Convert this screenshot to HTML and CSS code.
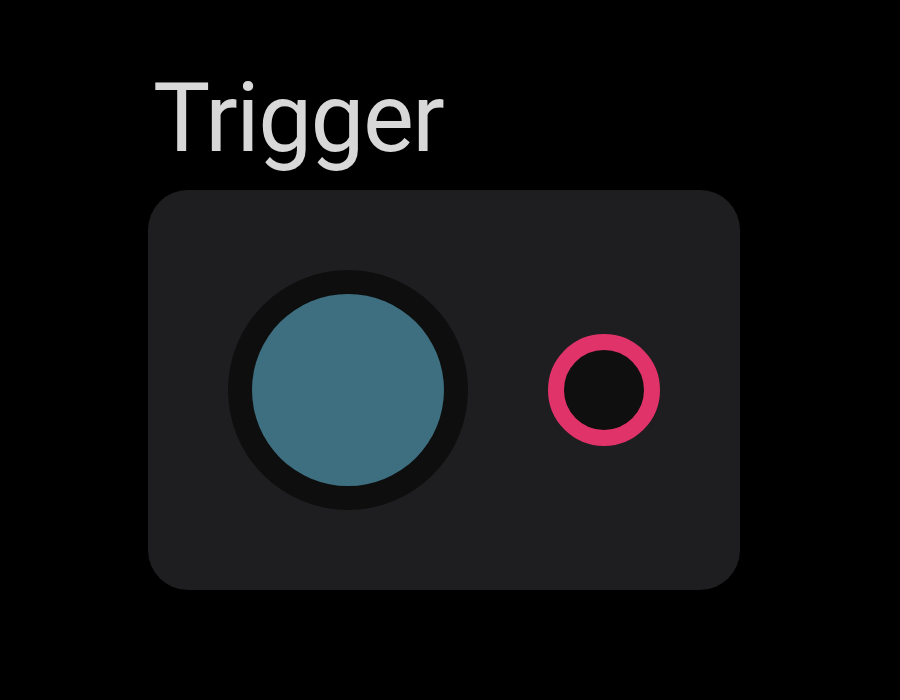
FILE: index.html
```html
<!DOCTYPE html>
<html>
<head>
<meta charset="utf-8">
<link rel="stylesheet" href="styles.css">
</head>
<body>
<div class="page">
  <h1 class="title">Trigger</h1>
  <div class="card">
    <div class="pad"><div class="pad-face"></div></div>
    <div class="led"></div>
  </div>
</div>
</body>
</html>
```
FILE: styles.css
```css
html, body {
  margin: 0;
  padding: 0;
  background: #000;
}
.page {
  padding: 70px 0 0 148px;
  font-family: Roboto, "Noto Sans", sans-serif;
}
.title {
  margin: 0 0 24px 5px;
  font-size: 96px;
  line-height: 96px;
  font-weight: 400;
  letter-spacing: -1.5px;
  color: #d8d8d8;
}
.card {
  width: 592px;
  height: 400px;
  box-sizing: border-box;
  padding: 0 80px;
  background: #1e1e20;
  border-radius: 40px;
  display: flex;
  align-items: center;
  gap: 80px;
}
.pad {
  width: 240px;
  height: 240px;
  border-radius: 50%;
  background: #0e0e0e;
  display: flex;
  align-items: center;
  justify-content: center;
}
.pad-face {
  width: 192px;
  height: 192px;
  border-radius: 50%;
  background: #3d6f80;
}
.led {
  width: 112px;
  height: 112px;
  box-sizing: border-box;
  border-radius: 50%;
  border: 16px solid #e0336a;
  background: #0f0f0f;
}
```
